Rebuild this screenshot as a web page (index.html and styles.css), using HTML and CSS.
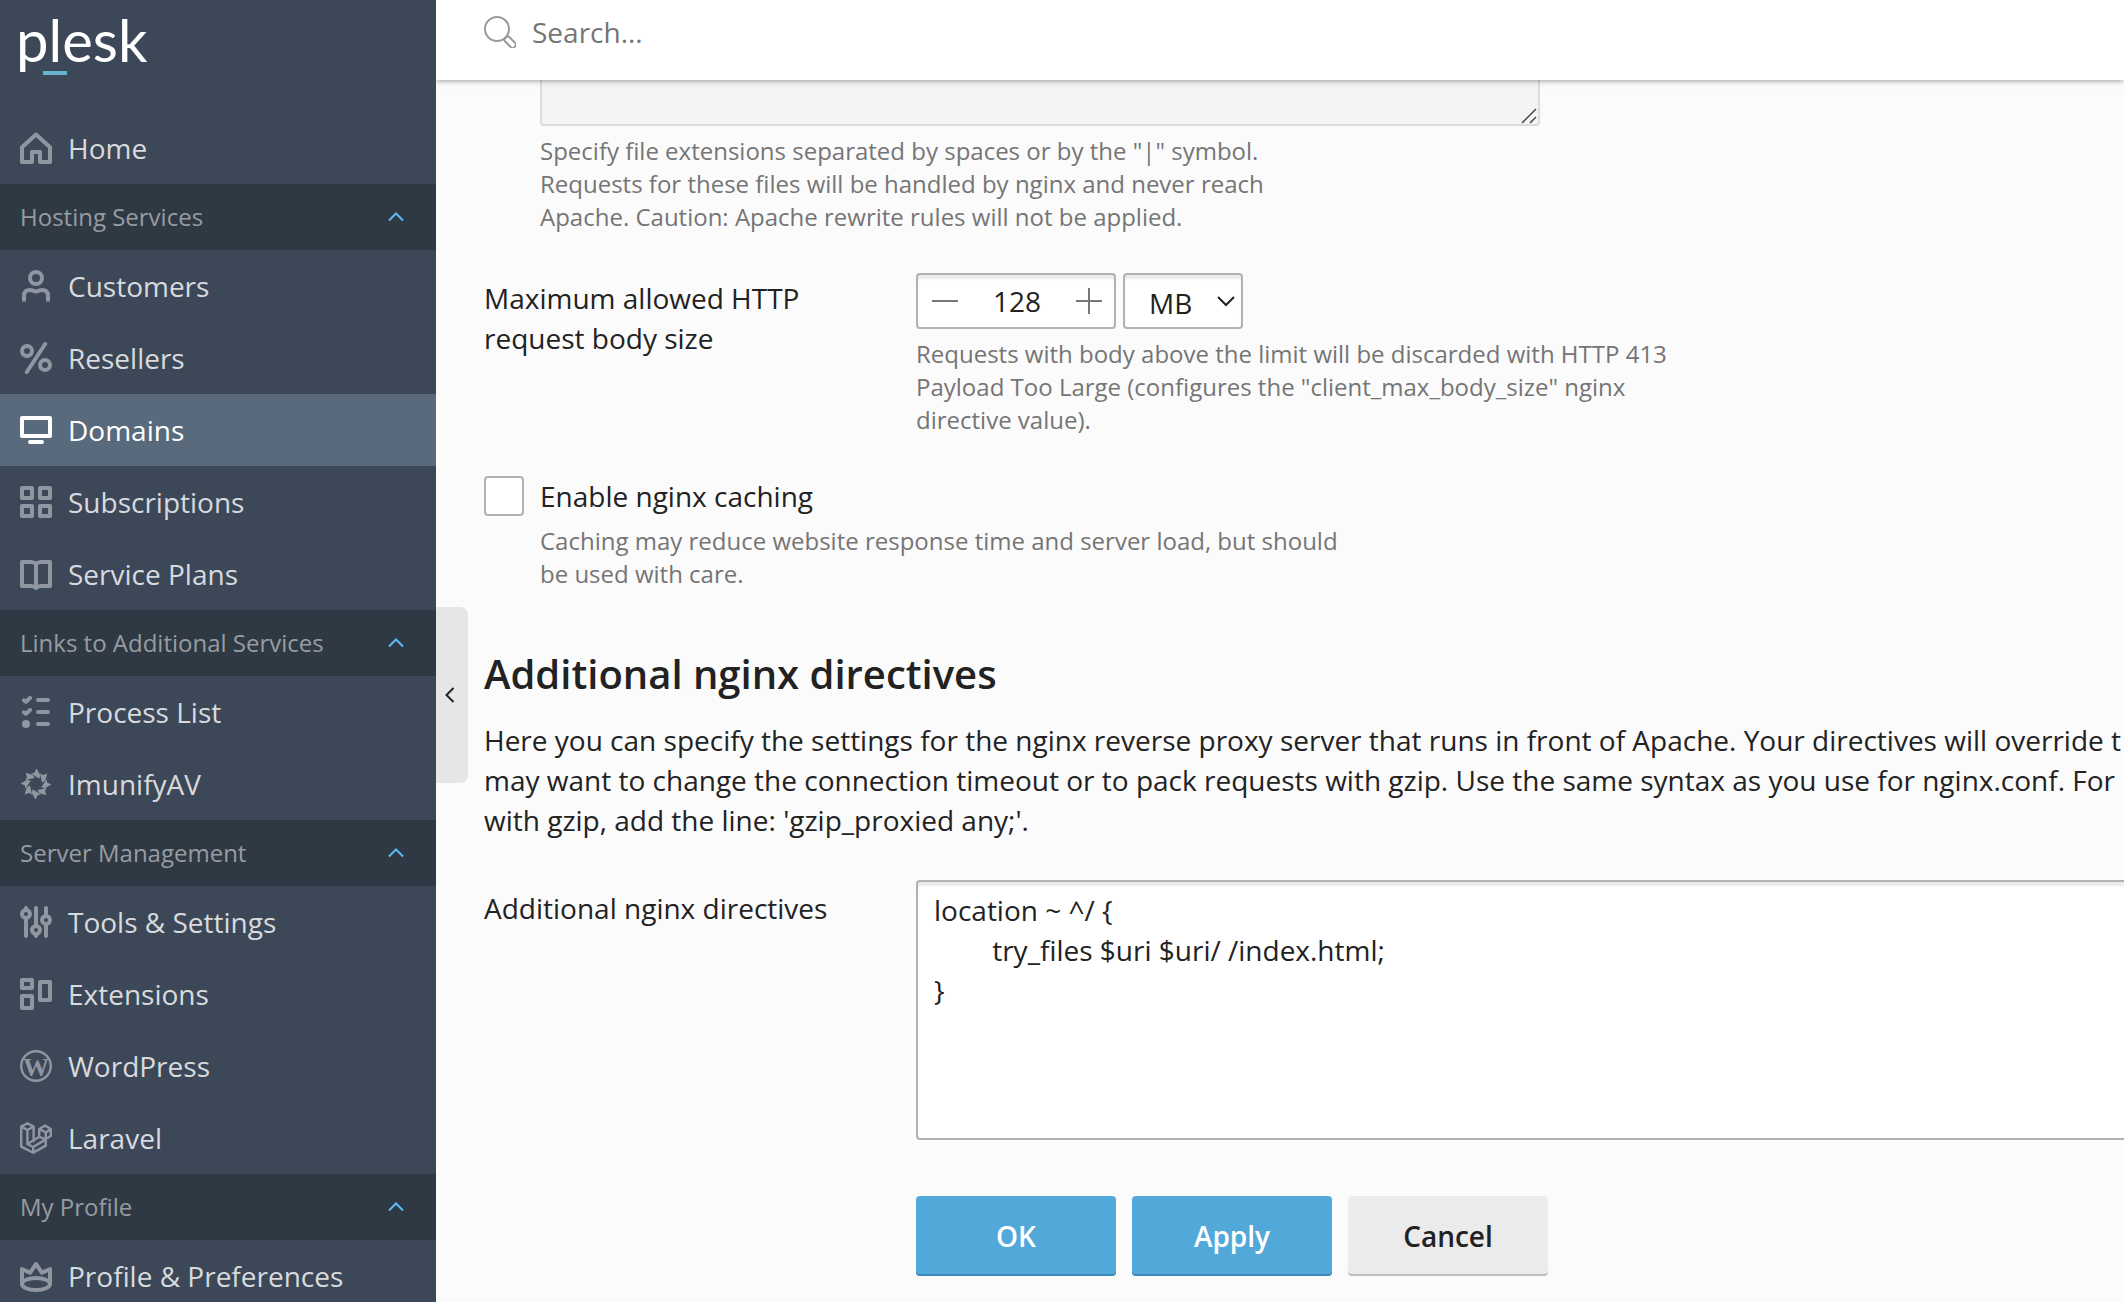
FILE: index.html
```html
<!doctype html>
<html lang="en">
<head>
    <meta charset="utf-8">
    <title>Apache &amp; nginx Settings - Plesk</title>
    <link rel="stylesheet" href="styles.css">
</head>
<body>

<div class="page">

    <nav class="sidebar">
        <a class="logo" href="#">plesk</a>

        <a class="nav-item" href="#">
            <svg class="icon" viewBox="0 0 16 16"><path d="M6 15H1V7.6L8 1.3l7 6.3V15h-5v-5H6z"/></svg>
            Home
        </a>

        <button class="nav-section" type="button">Hosting Services <svg class="chevron" viewBox="0 0 16 10"><path d="M1 8.5l7-7 7 7"/></svg></button>
        <a class="nav-item" href="#">
            <svg class="icon" viewBox="0 0 16 16"><circle cx="8" cy="4" r="3"/><path d="M2 15v-2c0-2 1-3 3-3 1.300 0 1.700.7 3 .7s1.700-.7 3-.7c2 0 3 1 3 3v2"/></svg>
            Customers
        </a>
        <a class="nav-item" href="#">
            <svg class="icon" viewBox="0 0 16 16"><circle cx="3.500" cy="4.500" r="2.500"/><circle cx="12.500" cy="11.500" r="2.500"/><path d="M12.600 1L3.400 15"/></svg>
            Resellers
        </a>
        <a class="nav-item active" href="#">
            <svg class="icon" viewBox="0 0 16 16"><path d="M1 2h14v9H1zM5 14h6"/></svg>
            Domains
        </a>
        <a class="nav-item" href="#">
            <svg class="icon" viewBox="0 0 16 16"><path d="M1 1h5v5H1zM10 1h5v5h-5zM1 10h5v5H1zM10 10h5v5h-5z"/></svg>
            Subscriptions
        </a>
        <a class="nav-item" href="#">
            <svg class="icon" viewBox="0 0 16 16"><path d="M8 3Q7 2 5.500 2H1v12h4.500Q7 14 8 15q1-1 2.500-1H15V2h-4.500Q9 2 8 3zv11"/></svg>
            Service Plans
        </a>

        <button class="nav-section" type="button">Links to Additional Services <svg class="chevron" viewBox="0 0 16 10"><path d="M1 8.5l7-7 7 7"/></svg></button>
        <a class="nav-item" href="#">
            <svg class="icon" viewBox="0 0 16 16"><path d="M9 2h5M9 8h5M9 14h5M2 2.200l1 .7L5 1M2 8.200l1 .7L5 7"/><circle class="solid" cx="3" cy="14" r="2"/></svg>
            Process List
        </a>
        <a class="nav-item" href="#">
            <svg class="icon" viewBox="-8 -8 16 16">
                <g class="solid">
                    <path id="blade" d="M.3-7.700L2.100-4.500 1.600-2.600-2.400-5.200-.8-5.600z"/>
                    <use href="#blade" transform="rotate(45)"/>
                    <use href="#blade" transform="rotate(90)"/>
                    <use href="#blade" transform="rotate(135)"/>
                    <use href="#blade" transform="rotate(180)"/>
                    <use href="#blade" transform="rotate(225)"/>
                    <use href="#blade" transform="rotate(270)"/>
                    <use href="#blade" transform="rotate(315)"/>
                </g>
            </svg>
            ImunifyAV
        </a>

        <button class="nav-section" type="button">Server Management <svg class="chevron" viewBox="0 0 16 10"><path d="M1 8.5l7-7 7 7"/></svg></button>
        <a class="nav-item" href="#">
            <svg class="icon" viewBox="0 0 16 16"><circle cx="3" cy="4" r="2"/><circle cx="8" cy="12" r="2"/><circle cx="13" cy="7" r="2"/><path d="M3 1v1M3 6v9M8 1v9M8 14v1M13 1v4M13 9v6"/></svg>
            Tools &amp; Settings
        </a>
        <a class="nav-item" href="#">
            <svg class="icon" viewBox="0 0 16 16"><path d="M1 1h5v4H1zM1 9h5v6H1zM10 2h5v9h-5z"/></svg>
            Extensions
        </a>
        <a class="nav-item" href="#">
            <svg class="icon" viewBox="0 0 16 16"><circle class="thin" cx="8" cy="8" r="7.400"/><text x="8" y="12.800" text-anchor="middle">W</text></svg>
            WordPress
        </a>
        <a class="nav-item" href="#">
            <svg class="icon" viewBox="0 0 16 16"><path class="thin" d="M.6 2.300L3.700.6l3.100 1.700v7.200M.6 2.300v10l6 3.100 6.300-3.600V8.300M.6 2.300L3.700 4l3.100-1.700M3.700 4v7l6-3.600 3.200 1.300M3.700 11l2.900 1.500 6.300-3.800M6.600 12.500v2.900M9.600 7.300V3.500l2.900-1.700 2.900 1.700V7l-2.500 1.500V5.200L9.600 3.500M12.900 5.200l2.500-1.700"/></svg>
            Laravel
        </a>

        <button class="nav-section" type="button">My Profile <svg class="chevron" viewBox="0 0 16 10"><path d="M1 8.5l7-7 7 7"/></svg></button>
        <a class="nav-item" href="#">
            <svg class="icon" viewBox="0 0 16 16"><path d="M1 12V4.500l4 1.900L8 2l3 4.400 4-1.900V12"/><ellipse cx="8" cy="12" rx="7" ry="3"/></svg>
            Profile &amp; Preferences
        </a>
    </nav>

    <main class="main">
        <button class="collapse" type="button" aria-label="Collapse sidebar">
            <svg viewBox="0 0 10 16"><path d="M8.500 1l-7 7 7 7"/></svg>
        </button>

        <header class="header">
            <svg class="search-icon" viewBox="0 0 32 32"><circle cx="13" cy="13" r="12"/><rect x="30.500" y="-3" width="13" height="6" rx="2.500" transform="rotate(45)"/></svg>
            <input class="search" type="search" placeholder="Search..." aria-label="Search">
        </header>

        <form class="content">
            <div class="indent extensions">
                <textarea class="ext-list" aria-label="File extensions" disabled></textarea>
                <svg class="grip" viewBox="0 0 16 16"><path d="M1 15L15 1M9 15l6-6"/></svg>
            </div>
            <p class="hint indent">Specify file extensions separated by spaces or by the "|" symbol. Requests for these files will be handled by nginx and never reach Apache. Caution: Apache rewrite rules will not be applied.</p>

            <div class="row size-row">
                <label class="row-label" for="size">Maximum allowed HTTP<br>request body size</label>
                <div>
                    <div class="controls">
                        <div class="box stepper">
                            <button type="button" aria-label="Decrease"><svg viewBox="0 0 26 26"><path d="M0 13h26"/></svg></button>
                            <input id="size" type="text" value="128">
                            <button type="button" aria-label="Increase"><svg viewBox="0 0 26 26"><path d="M0 13h26M13 0v26"/></svg></button>
                        </div>
                        <div class="unit">
                            <select class="box" aria-label="Unit">
                                <option>MB</option>
                            </select>
                            <svg viewBox="0 0 18 11"><path d="M1 1l8 8 8-8"/></svg>
                        </div>
                    </div>
                    <p class="hint">Requests with body above the limit will be discarded with HTTP 413 Payload Too Large (configures the "client_max_body_size" nginx directive value).</p>
                </div>
            </div>

            <div class="check-row">
                <input id="caching" type="checkbox">
                <label for="caching">Enable nginx caching</label>
            </div>
            <p class="hint indent">Caching may reduce website response time and server load, but should be used with care.</p>

            <section class="directives">
                <h2>Additional nginx directives</h2>
                <p>Here you can specify the settings for the nginx reverse proxy server that runs in front of Apache. Your directives will override t<br>
                may want to change the connection timeout or to pack requests with gzip. Use the same syntax as you use for nginx.conf. For<br>
                with gzip, add the line: 'gzip_proxied any;'.</p>
                <div class="row">
                    <label class="row-label" for="directives">Additional nginx directives</label>
                    <textarea id="directives" class="box" spellcheck="false">location ~ ^/ {
        try_files $uri $uri/ /index.html;
}</textarea>
                </div>
            </section>

            <div class="buttons">
                <button class="btn primary" type="submit">OK</button>
                <button class="btn primary" type="button">Apply</button>
                <button class="btn" type="button">Cancel</button>
            </div>
        </form>
    </main>

</div>

</body>
</html>
```
FILE: styles.css
```css
* {
    box-sizing: border-box;
    margin: 0;
    padding: 0;
}
body {
    font: 28px/40px "Open Sans", sans-serif;
    color: #222;
    background: #fbfbfb;
}
button, input, select, textarea {
    font: inherit;
    color: inherit;
    border: 0;
    background: none;
}
a {
    text-decoration: none;
}
svg {
    display: block;
    fill: none;
    stroke: currentColor;
    stroke-width: 2;
}
.page {
    display: flex;
    height: 100vh;
    overflow: hidden;
}

/* sidebar */
.sidebar {
    flex: 0 0 436px;
    overflow: hidden;
    background: #3c4858;
}
.logo {
    position: relative;
    display: block;
    height: 112px;
    padding: 6px 16px;
    font: 58px/68px Lato, sans-serif;
    color: #fff;
}
.logo::after {
    content: "";
    position: absolute;
    left: 43px;
    top: 71px;
    width: 24px;
    height: 4px;
    background: #67b4d1;
}
.nav-item {
    display: flex;
    align-items: center;
    gap: 16px;
    height: 72px;
    padding: 0 20px;
    color: #d8dade;
}
.icon {
    width: 32px;
    height: 32px;
    color: #9096a0;
    stroke-linecap: round;
    stroke-linejoin: round;
}
.icon .solid {
    fill: currentColor;
    stroke: none;
}
.icon .thin {
    stroke-width: 1.2;
}
.icon text {
    font: bold 13px "Liberation Serif", serif;
    fill: currentColor;
    stroke: none;
}
.active {
    background: #586a7b;
}
.active, .active .icon {
    color: #fff;
}
.nav-section {
    display: flex;
    align-items: center;
    justify-content: space-between;
    width: 100%;
    height: 66px;
    padding: 0 32px 0 20px;
    font-size: 24px;
    color: #979ca2;
    background: #2f3944;
}
.chevron {
    width: 16px;
    height: 10px;
    color: #5bbcf5;
}

/* main area */
.main {
    position: relative;
    flex: 1;
    min-width: 0;
    overflow: hidden;
}
.collapse {
    position: absolute;
    left: 0;
    top: 607px;
    width: 32px;
    height: 176px;
    padding-left: 9px;
    border-radius: 0 8px 8px 0;
    background: #e6e6e6;
}
.collapse svg {
    width: 10px;
    height: 16px;
}
.header {
    position: relative;
    z-index: 1;
    display: flex;
    align-items: flex-start;
    gap: 16px;
    height: 80px;
    padding: 12px 48px;
    background: #fff;
    box-shadow: 0 0 6px rgba(0, 0, 0, .5);
}
.search-icon {
    width: 32px;
    height: 32px;
    margin-top: 4px;
    color: #999;
}
.search {
    flex: 1;
    height: 40px;
    outline: 0;
}
.search::placeholder {
    color: #757575;
}
.content {
    padding: 0 48px;
}
.indent {
    margin-left: 56px;
}
/* scrolled half way under the header */
.extensions {
    position: relative;
    width: 1000px;
    height: 126px;
    margin-top: -80px;
}
.ext-list {
    display: block;
    width: 100%;
    height: 100%;
    border: 2px solid #dcdcdc;
    border-radius: 4px;
    background: #f4f4f4;
    resize: none;
}
.grip {
    position: absolute;
    right: 3px;
    bottom: 2px;
    width: 16px;
    height: 16px;
    stroke-width: 1.5;
    color: #444;
}
.hint {
    max-width: 808px;
    padding-top: 8px;
    font-size: 24px;
    line-height: 33px;
    color: #757575;
}
.row {
    display: flex;
}
.row-label {
    flex: 0 0 432px;
    padding-top: 8px;
}
.size-row {
    margin-top: 40px;
}
.size-row .row-label {
    padding-top: 5px;
}
.controls {
    display: flex;
    gap: 7px;
}
.box {
    border: 2px solid #b2b2b2;
    border-radius: 4px;
    background: #fff;
    box-shadow: inset 0 4px 2px #ebebeb;
}
.stepper {
    display: flex;
    align-items: center;
    justify-content: space-between;
    width: 200px;
    height: 56px;
    padding: 0 12px 0 14px;
}
.stepper svg {
    width: 26px;
    height: 26px;
    color: #777;
}
.stepper input {
    width: 80px;
    text-align: center;
}
.unit {
    position: relative;
}
.unit select {
    width: 120px;
    height: 56px;
    padding: 4px 24px 0;
    appearance: none;
}
.unit svg {
    position: absolute;
    right: 8px;
    top: 23px;
    width: 18px;
    height: 11px;
    pointer-events: none;
}
.check-row {
    display: flex;
    align-items: center;
    gap: 16px;
    margin-top: 40px;
}
.check-row input {
    width: 40px;
    height: 40px;
    border: 2px solid #b2b2b2;
    border-radius: 4px;
    background: #fff;
    appearance: none;
}

/* runs past the right edge on narrow windows */
.directives {
    min-width: 2440px;
    margin-top: 56px;
}
.directives h2 {
    font-size: 40px;
    font-weight: 600;
    line-height: 56px;
}
.directives p {
    margin: 18px 0 40px;
    white-space: nowrap;
}
.directives textarea {
    flex: 1;
    height: 260px;
    padding: 8px 16px;
    resize: none;
}
.buttons {
    display: flex;
    gap: 16px;
    margin: 56px 0 0 432px;
}
.btn {
    width: 200px;
    height: 80px;
    border-radius: 4px;
    font-weight: 600;
    background: #ebebeb;
    box-shadow: inset 0 -2px #c1c1c1;
}
.primary {
    color: #fff;
    background: #53a8da;
    box-shadow: inset 0 -2px #3f8ab7;
}
```
